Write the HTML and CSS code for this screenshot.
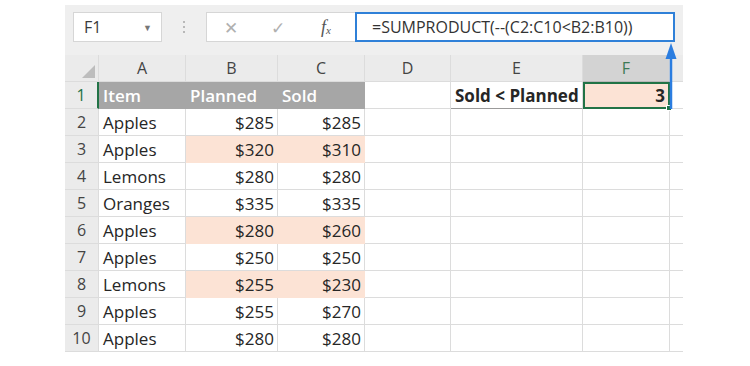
FILE: index.html
```html
<!DOCTYPE html>
<html>
<head>
    <meta charset="utf-8" />
    <title>SUMPRODUCT</title>
    <link rel="stylesheet" href="styles.css">
</head>
<body>
    <div class="sheet">
        <div class="bar">
            <div class="namebox">
                <span>F1</span>
                <span class="drop">&#9660;</span>
            </div>
            <div class="dots"><i></i><i></i><i></i></div>
            <div class="fnbox">
                <span class="btn">&#10005;</span>
                <span class="btn">&#10003;</span>
                <span class="fx">f<sub>x</sub></span>
            </div>
            <div class="formula">=SUMPRODUCT(--(C2:C10&lt;B2:B10))</div>
        </div>
        <div class="grid">
            <div class="corner"></div>
            <div class="colhead">A</div>
            <div class="colhead">B</div>
            <div class="colhead">C</div>
            <div class="colhead">D</div>
            <div class="colhead">E</div>
            <div class="colhead sel">F</div>
            <div class="colhead last"></div>

            <div class="rowhead sel">1</div>
            <div class="cell title">Item</div>
            <div class="cell title">Planned</div>
            <div class="cell title">Sold</div>
            <div class="cell"></div>
            <div class="cell label">Sold &lt; Planned</div>
            <div class="cell num active">3<span class="handle"></span></div>
            <div class="cell last"></div>

            <div class="rowhead">2</div>
            <div class="cell">Apples</div>
            <div class="cell num">$285</div>
            <div class="cell num">$285</div>
            <div class="cell"></div><div class="cell"></div><div class="cell"></div><div class="cell last"></div>

            <div class="rowhead">3</div>
            <div class="cell">Apples</div>
            <div class="cell num fill">$320</div>
            <div class="cell num fill">$310</div>
            <div class="cell"></div><div class="cell"></div><div class="cell"></div><div class="cell last"></div>

            <div class="rowhead">4</div>
            <div class="cell">Lemons</div>
            <div class="cell num">$280</div>
            <div class="cell num">$280</div>
            <div class="cell"></div><div class="cell"></div><div class="cell"></div><div class="cell last"></div>

            <div class="rowhead">5</div>
            <div class="cell">Oranges</div>
            <div class="cell num">$335</div>
            <div class="cell num">$335</div>
            <div class="cell"></div><div class="cell"></div><div class="cell"></div><div class="cell last"></div>

            <div class="rowhead">6</div>
            <div class="cell">Apples</div>
            <div class="cell num fill">$280</div>
            <div class="cell num fill">$260</div>
            <div class="cell"></div><div class="cell"></div><div class="cell"></div><div class="cell last"></div>

            <div class="rowhead">7</div>
            <div class="cell">Apples</div>
            <div class="cell num">$250</div>
            <div class="cell num">$250</div>
            <div class="cell"></div><div class="cell"></div><div class="cell"></div><div class="cell last"></div>

            <div class="rowhead">8</div>
            <div class="cell">Lemons</div>
            <div class="cell num fill">$255</div>
            <div class="cell num fill">$230</div>
            <div class="cell"></div><div class="cell"></div><div class="cell"></div><div class="cell last"></div>

            <div class="rowhead">9</div>
            <div class="cell">Apples</div>
            <div class="cell num">$255</div>
            <div class="cell num">$270</div>
            <div class="cell"></div><div class="cell"></div><div class="cell"></div><div class="cell last"></div>

            <div class="rowhead">10</div>
            <div class="cell">Apples</div>
            <div class="cell num">$280</div>
            <div class="cell num">$280</div>
            <div class="cell"></div><div class="cell"></div><div class="cell"></div><div class="cell last"></div>
        </div>
        <!-- arrow from F1 up to the formula bar -->
        <svg class="arrow" width="16" height="66" viewBox="0 0 16 66">
            <line x1="8" y1="10" x2="8" y2="66" stroke="#2b7de0" stroke-width="2.5"/>
            <polygon points="8,0 13.5,16 2.5,16" fill="#2b7de0"/>
        </svg>
    </div>
</body>
</html>
```

FILE: styles.css
```css
*{
    margin: 0;
    padding: 0;
    box-sizing: border-box;
}
body{
    background: #fff;
    font-family: "Open Sans", "Liberation Sans", sans-serif;
    color: #262626;
}
.sheet{
    position: relative;
    width: 618px;
    margin: 5px 0 0 65px;
}
.bar{
    height: 50px;
    background: #efefef;
    display: flex;
    align-items: flex-start;
    padding-top: 7px;
}
.namebox{
    width: 89px;
    height: 30px;
    margin-left: 8px;
    background: #fff;
    border: 1px solid #d6d6d6;
    display: flex;
    align-items: center;
    justify-content: space-between;
    padding: 0 9px 0 10px;
    font-size: 16px;
    color: #3a3a3a;
}
.drop{
    font-size: 9px;
    color: #777;
}
.dots{
    width: 44px;
    height: 30px;
    display: flex;
    flex-direction: column;
    align-items: center;
    justify-content: center;
    gap: 3px;
}
.dots i{
    width: 2px;
    height: 2px;
    background: #b8b8b8;
}
.fnbox{
    width: 149px;
    height: 30px;
    background: #fff;
    border: 1px solid #d6d6d6;
    border-right: none;
    display: flex;
    align-items: center;
    padding-left: 17px;
}
.btn{
    width: 47px;
    font-size: 17px;
    color: #b0b0b0;
}
.fx{
    font-family: "Liberation Serif", serif;
    font-style: italic;
    font-size: 18px;
    color: #555;
    margin-left: 3px;
}
.fx sub{
    font-size: 11px;
    vertical-align: -1px;
}
.formula{
    width: 320px;
    height: 30px;
    background: #fff;
    border: 2px solid #2f80d8;
    font-size: 16px;
    line-height: 26px;
    padding-left: 15px;
    color: #333;
    white-space: nowrap;
}
.grid{
    display: grid;
    grid-template-columns: 34px 87px 92px 87px 86px 132px 87px 13px;
    grid-template-rows: 27px repeat(10, 27px);
    font-size: 17px;
    font-weight: 500;
}
.grid > div{
    border-right: 1px solid #dcdcdc;
    border-bottom: 1px solid #dcdcdc;
    display: flex;
    align-items: center;
    white-space: nowrap;
    overflow: hidden;
}
.corner{
    background: #ebebeb;
    position: relative;
}
.corner::after{
    content: "";
    position: absolute;
    right: 3px;
    bottom: 3px;
    border-left: 13px solid transparent;
    border-bottom: 13px solid #bdbdbd;
}
.colhead{
    background: #ebebeb;
    justify-content: center;
    color: #444;
    font-size: 16px;
}
.colhead.sel{
    background: #d3d3d3;
    color: #3c7a55;
    border-bottom-color: #b8b8b8;
}
.grid > .last{
    border-right: none;
}
.rowhead{
    background: #ebebeb;
    justify-content: center;
    color: #444;
    font-size: 16px;
}
.grid > .rowhead.sel{
    color: #217346;
    border-right: 2px solid #217346;
}
.cell{
    background: #fff;
    padding: 0 3px 0 4px;
}
.num{
    justify-content: flex-end;
}
.grid > .title{
    background: #a6a6a6;
    border-color: #a6a6a6;
    color: #fff;
    font-weight: 600;
}
.grid > .fill{
    background: #fce3d5;
    border-color: #fce3d5;
}
.grid > .label{
    font-weight: 700;
    border-bottom-color: #9a9a9a;
}
.grid > .active{
    position: relative;
    overflow: visible;
    background: #fce3d5;
    border: 2px solid #217346;
    font-weight: 700;
    padding-right: 3px;
}
.handle{
    position: absolute;
    right: -4px;
    bottom: -4px;
    width: 6px;
    height: 6px;
    background: #217346;
    border: 1px solid #fff;
}
.arrow{
    position: absolute;
    left: 598px;
    top: 38px;
}
```
